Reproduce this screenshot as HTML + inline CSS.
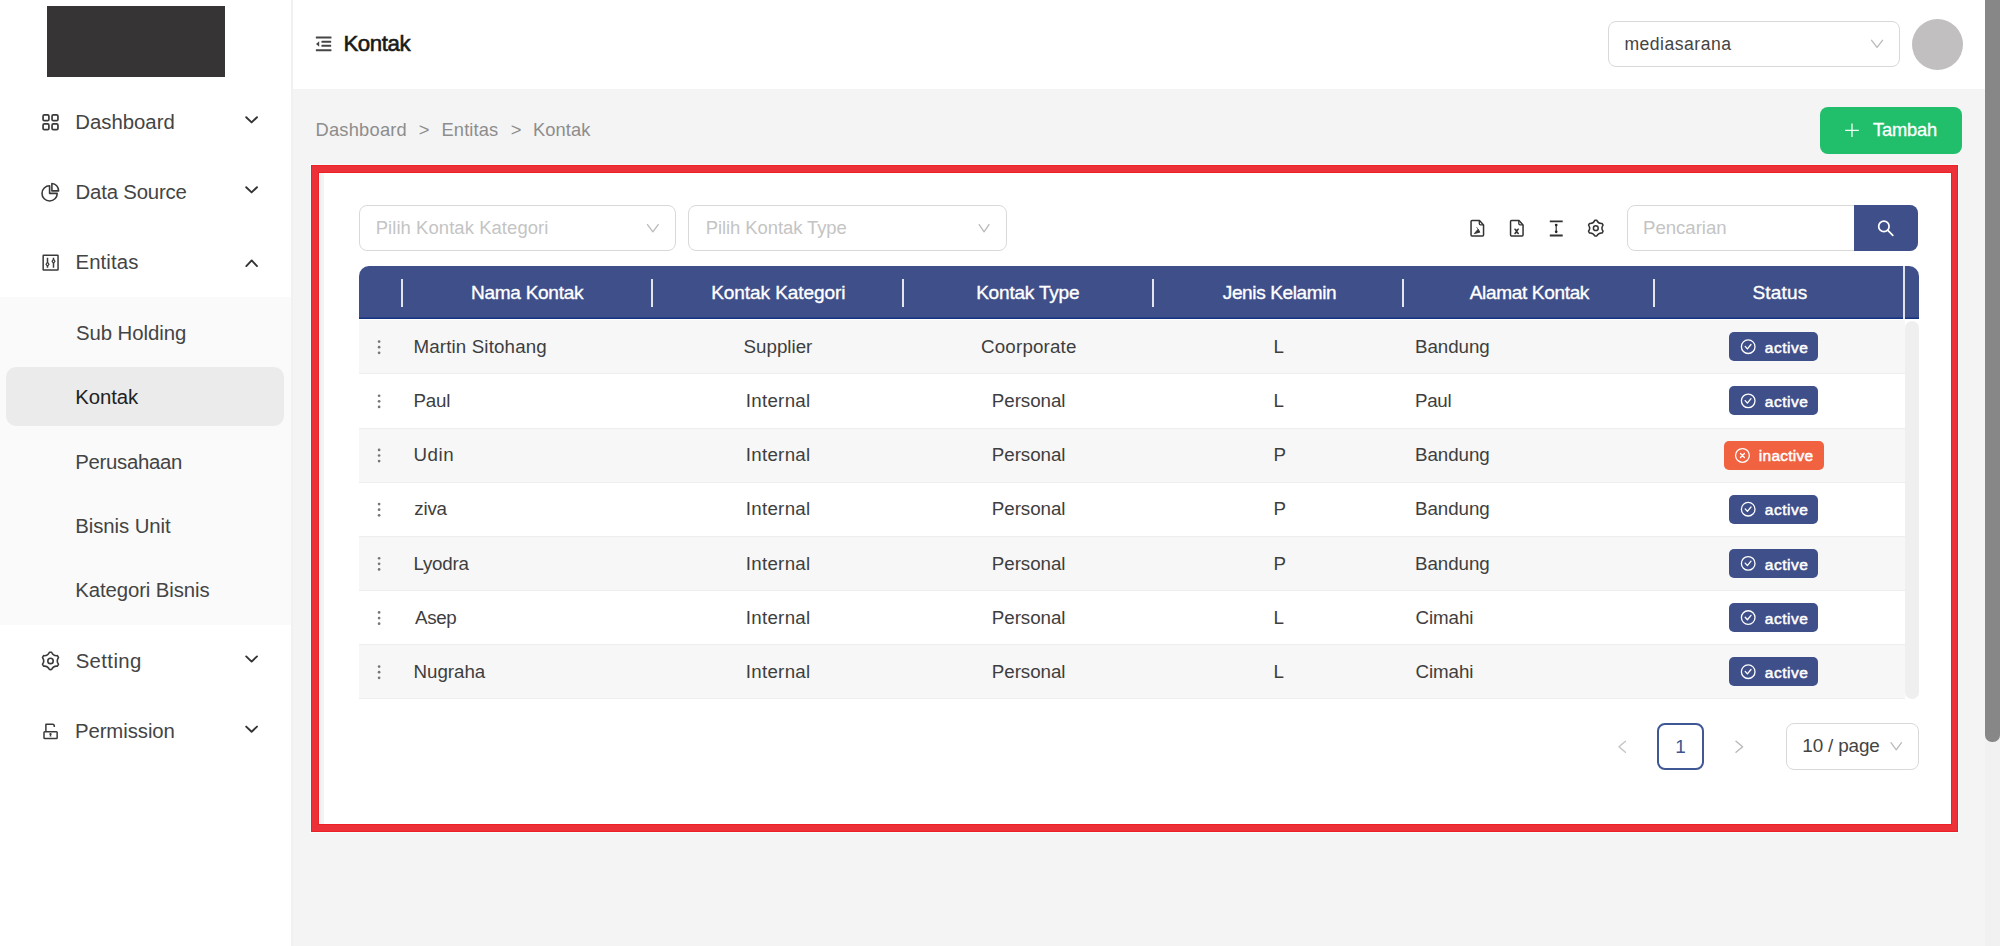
<!DOCTYPE html>
<html><head><meta charset="utf-8"><title>Kontak</title>
<style>
html,body{margin:0;padding:0}
body{width:2000px;height:946px;overflow:hidden;position:relative;background:#f4f4f4;font-family:"Liberation Sans",sans-serif}
.b{position:absolute}
.t{position:absolute;white-space:nowrap;line-height:0;font-family:"Liberation Sans",sans-serif}
svg{position:absolute;overflow:visible}
</style></head><body>
<div class="b" style="left:0px;top:0px;width:291px;height:946px;background:#fff"></div>
<div class="b" style="left:291px;top:0px;width:2px;height:946px;background:#f1f1f1"></div>
<div class="b" style="left:293px;top:0px;width:1692px;height:89px;background:#fff"></div>
<div class="b" style="left:47px;top:6px;width:178px;height:71px;background:#373435"></div>
<div class="b" style="left:0px;top:297px;width:291px;height:328px;background:#fafafa"></div>
<div class="b" style="left:6px;top:367px;width:278px;height:59px;background:#ebebeb;border-radius:10px"></div>
<div class="t" style="left:75.23px;top:121.70px;font-size:20.35px;font-weight:normal;letter-spacing:0.004px;color:#444;">Dashboard</div>
<div class="t" style="left:75.53px;top:191.95px;font-size:20.35px;font-weight:normal;letter-spacing:-0.174px;color:#444;">Data Source</div>
<div class="t" style="left:75.53px;top:262.15px;font-size:20.35px;font-weight:normal;letter-spacing:0.099px;color:#444;">Entitas</div>
<div class="t" style="left:75.68px;top:660.75px;font-size:20.35px;font-weight:normal;letter-spacing:0.380px;color:#444;">Setting</div>
<div class="t" style="left:74.93px;top:730.65px;font-size:20.35px;font-weight:normal;letter-spacing:-0.072px;color:#444;">Permission</div>
<div class="t" style="left:75.98px;top:333.15px;font-size:20.35px;font-weight:normal;letter-spacing:-0.053px;color:#444;">Sub Holding</div>
<div class="t" style="left:75.23px;top:396.85px;font-size:20.35px;font-weight:normal;letter-spacing:-0.083px;color:#222;">Kontak</div>
<div class="t" style="left:75.23px;top:461.95px;font-size:20.35px;font-weight:normal;letter-spacing:-0.295px;color:#444;">Perusahaan</div>
<div class="t" style="left:75.23px;top:526.35px;font-size:20.35px;font-weight:normal;letter-spacing:-0.060px;color:#444;">Bisnis Unit</div>
<div class="t" style="left:75.23px;top:590.15px;font-size:20.35px;font-weight:normal;letter-spacing:-0.094px;color:#444;">Kategori Bisnis</div>
<div class="t" style="left:343.38px;top:44.15px;font-size:22.24px;font-weight:normal;letter-spacing:-0.409px;color:#1a1a1a;-webkit-text-stroke:0.6px #1a1a1a">Kontak</div>
<div class="b" style="left:1608px;top:21px;width:292px;height:46px;background:#fff;border:1px solid #d9d9d9;border-radius:8px;box-sizing:border-box"></div>
<div class="t" style="left:1624.43px;top:43.75px;font-size:17.60px;font-weight:normal;letter-spacing:0.482px;color:#444;">mediasarana</div>
<div class="b" style="left:1912px;top:19px;width:51px;height:51px;background:#c1bfc0;border-radius:50%"></div>
<div class="b" style="left:1985px;top:0px;width:15px;height:946px;background:#f1f1f1"></div>
<div class="b" style="left:1985px;top:0px;width:15px;height:742px;background:#878787;border-radius:0 0 7px 7px"></div>
<div class="t" style="left:315.50px;top:129.75px;font-size:18.31px;font-weight:normal;letter-spacing:0.223px;color:#8d8d8d;">Dashboard</div>
<div class="t" style="left:418.80px;top:129.75px;font-size:18.31px;font-weight:normal;letter-spacing:0.000px;color:#8d8d8d;">&gt;</div>
<div class="t" style="left:441.50px;top:129.75px;font-size:18.31px;font-weight:normal;letter-spacing:0.129px;color:#8d8d8d;">Entitas</div>
<div class="t" style="left:510.70px;top:129.75px;font-size:18.31px;font-weight:normal;letter-spacing:0.000px;color:#8d8d8d;">&gt;</div>
<div class="t" style="left:532.90px;top:129.75px;font-size:18.31px;font-weight:normal;letter-spacing:0.132px;color:#8d8d8d;">Kontak</div>
<div class="b" style="left:1820px;top:107px;width:142px;height:47px;background:#21bf6b;border-radius:8px"></div>
<div class="t" style="left:1872.99px;top:129.95px;font-size:18.31px;font-weight:normal;letter-spacing:-0.157px;color:#fff;-webkit-text-stroke:0.3px #fff">Tambah</div>
<div class="b" style="left:324px;top:173px;width:1627px;height:651px;background:#fff"></div>
<div class="b" style="left:319px;top:173px;width:1px;height:651px;background:#f6fdfd"></div>
<div class="b" style="left:359px;top:205px;width:317px;height:46px;background:#fff;border:1px solid #d9d9d9;border-radius:8px;box-sizing:border-box"></div>
<div class="t" style="left:375.69px;top:228.05px;font-size:18.46px;font-weight:normal;letter-spacing:0.075px;color:#c4c4c4;">Pilih Kontak Kategori</div>
<div class="b" style="left:688px;top:205px;width:319px;height:46px;background:#fff;border:1px solid #d9d9d9;border-radius:8px;box-sizing:border-box"></div>
<div class="t" style="left:705.69px;top:228.05px;font-size:18.46px;font-weight:normal;letter-spacing:-0.063px;color:#c4c4c4;">Pilih Kontak Type</div>
<div class="b" style="left:1627px;top:205px;width:291px;height:46px;background:#fff;border:1px solid #d9d9d9;border-radius:8px;box-sizing:border-box"></div>
<div class="b" style="left:1854px;top:205px;width:64px;height:46px;background:#3e4f8a;border-radius:0 8px 8px 0"></div>
<div class="t" style="left:1643.07px;top:228.15px;font-size:18.60px;font-weight:normal;letter-spacing:-0.030px;color:#c4c4c4;">Pencarian</div>
<div class="b" style="left:359px;top:266px;width:1544px;height:53px;background:#3f4f8a;border-top-left-radius:10px;box-shadow:inset 0 -1.5px 0 #143383"></div>
<div class="b" style="left:1903px;top:266px;width:2px;height:53px;background:#dfe3ec"></div>
<div class="b" style="left:1905px;top:266px;width:14px;height:53px;background:#3f4f8a;border-top-right-radius:10px;box-shadow:inset 0 -1.5px 0 #143383"></div>
<div class="b" style="left:401.0px;top:279px;width:2px;height:28px;background:rgba(255,255,255,0.85)"></div>
<div class="b" style="left:651.0px;top:279px;width:2px;height:28px;background:rgba(255,255,255,0.85)"></div>
<div class="b" style="left:901.5px;top:279px;width:2px;height:28px;background:rgba(255,255,255,0.85)"></div>
<div class="b" style="left:1152.0px;top:279px;width:2px;height:28px;background:rgba(255,255,255,0.85)"></div>
<div class="b" style="left:1402.3px;top:279px;width:2px;height:28px;background:rgba(255,255,255,0.85)"></div>
<div class="b" style="left:1652.5px;top:279px;width:2px;height:28px;background:rgba(255,255,255,0.85)"></div>
<div class="t" style="left:470.94px;top:292.70px;font-size:19.04px;font-weight:normal;letter-spacing:-0.273px;color:#fff;-webkit-text-stroke:0.35px #fff">Nama Kontak</div>
<div class="t" style="left:711.14px;top:292.70px;font-size:19.04px;font-weight:normal;letter-spacing:-0.075px;color:#fff;-webkit-text-stroke:0.35px #fff">Kontak Kategori</div>
<div class="t" style="left:976.14px;top:292.70px;font-size:19.04px;font-weight:normal;letter-spacing:-0.199px;color:#fff;-webkit-text-stroke:0.35px #fff">Kontak Type</div>
<div class="t" style="left:1222.80px;top:292.70px;font-size:19.04px;font-weight:normal;letter-spacing:-0.392px;color:#fff;-webkit-text-stroke:0.35px #fff">Jenis Kelamin</div>
<div class="t" style="left:1469.76px;top:292.70px;font-size:19.04px;font-weight:normal;letter-spacing:-0.344px;color:#fff;-webkit-text-stroke:0.35px #fff">Alamat Kontak</div>
<div class="t" style="left:1752.54px;top:292.70px;font-size:19.04px;font-weight:normal;letter-spacing:0.134px;color:#fff;-webkit-text-stroke:0.35px #fff">Status</div>
<div class="b" style="left:359px;top:320.30px;width:1546px;height:54.17px;background:#f7f7f7;box-shadow:inset 0 -1px 0 #eeeeee"></div>
<div class="t" style="left:413.46px;top:346.85px;font-size:18.75px;font-weight:normal;letter-spacing:0.137px;color:#3e3e3e;">Martin Sitohang</div>
<div class="t" style="left:743.55px;top:346.85px;font-size:18.75px;font-weight:normal;letter-spacing:-0.004px;color:#3e3e3e;">Supplier</div>
<div class="t" style="left:981.05px;top:346.85px;font-size:18.75px;font-weight:normal;letter-spacing:0.175px;color:#3e3e3e;">Coorporate</div>
<div class="t" style="left:1273.56px;top:346.85px;font-size:18.75px;font-weight:normal;letter-spacing:0.000px;color:#3e3e3e;">L</div>
<div class="t" style="left:1414.96px;top:346.85px;font-size:18.75px;font-weight:normal;letter-spacing:-0.055px;color:#3e3e3e;">Bandung</div>
<div class="b" style="left:1729px;top:332px;width:89px;height:29px;background:#3f4f8a;border-radius:5px"></div>
<div class="t" style="left:1764.74px;top:347.85px;font-size:15.50px;font-weight:normal;letter-spacing:0.531px;color:#fff;-webkit-text-stroke:0.5px #fff">active</div>
<div class="b" style="left:359px;top:374.47px;width:1546px;height:54.17px;background:#fff;box-shadow:inset 0 -1px 0 #eeeeee"></div>
<div class="t" style="left:413.46px;top:401.02px;font-size:18.75px;font-weight:normal;letter-spacing:-0.179px;color:#3e3e3e;">Paul</div>
<div class="t" style="left:745.67px;top:401.02px;font-size:18.75px;font-weight:normal;letter-spacing:0.292px;color:#3e3e3e;">Internal</div>
<div class="t" style="left:991.81px;top:401.02px;font-size:18.75px;font-weight:normal;letter-spacing:-0.044px;color:#3e3e3e;">Personal</div>
<div class="t" style="left:1273.56px;top:401.02px;font-size:18.75px;font-weight:normal;letter-spacing:0.000px;color:#3e3e3e;">L</div>
<div class="t" style="left:1414.96px;top:401.02px;font-size:18.75px;font-weight:normal;letter-spacing:-0.312px;color:#3e3e3e;">Paul</div>
<div class="b" style="left:1729px;top:386px;width:89px;height:29px;background:#3f4f8a;border-radius:5px"></div>
<div class="t" style="left:1764.74px;top:402.02px;font-size:15.50px;font-weight:normal;letter-spacing:0.531px;color:#fff;-webkit-text-stroke:0.5px #fff">active</div>
<div class="b" style="left:359px;top:428.64px;width:1546px;height:54.17px;background:#f7f7f7;box-shadow:inset 0 -1px 0 #eeeeee"></div>
<div class="t" style="left:413.55px;top:455.19px;font-size:18.75px;font-weight:normal;letter-spacing:0.501px;color:#3e3e3e;">Udin</div>
<div class="t" style="left:745.67px;top:455.19px;font-size:18.75px;font-weight:normal;letter-spacing:0.292px;color:#3e3e3e;">Internal</div>
<div class="t" style="left:991.81px;top:455.19px;font-size:18.75px;font-weight:normal;letter-spacing:-0.044px;color:#3e3e3e;">Personal</div>
<div class="t" style="left:1273.56px;top:455.19px;font-size:18.75px;font-weight:normal;letter-spacing:0.000px;color:#3e3e3e;">P</div>
<div class="t" style="left:1414.96px;top:455.19px;font-size:18.75px;font-weight:normal;letter-spacing:-0.055px;color:#3e3e3e;">Bandung</div>
<div class="b" style="left:1723.5px;top:441px;width:100.70000000000005px;height:29px;background:#f06240;border-radius:5px"></div>
<div class="t" style="left:1758.86px;top:456.19px;font-size:15.50px;font-weight:normal;letter-spacing:0.239px;color:#fff;-webkit-text-stroke:0.5px #fff">inactive</div>
<div class="b" style="left:359px;top:482.81px;width:1546px;height:54.17px;background:#fff;box-shadow:inset 0 -1px 0 #eeeeee"></div>
<div class="t" style="left:414.24px;top:509.36px;font-size:18.75px;font-weight:normal;letter-spacing:-0.195px;color:#3e3e3e;">ziva</div>
<div class="t" style="left:745.67px;top:509.36px;font-size:18.75px;font-weight:normal;letter-spacing:0.292px;color:#3e3e3e;">Internal</div>
<div class="t" style="left:991.81px;top:509.36px;font-size:18.75px;font-weight:normal;letter-spacing:-0.044px;color:#3e3e3e;">Personal</div>
<div class="t" style="left:1273.56px;top:509.36px;font-size:18.75px;font-weight:normal;letter-spacing:0.000px;color:#3e3e3e;">P</div>
<div class="t" style="left:1414.96px;top:509.36px;font-size:18.75px;font-weight:normal;letter-spacing:-0.055px;color:#3e3e3e;">Bandung</div>
<div class="b" style="left:1729px;top:495px;width:89px;height:29px;background:#3f4f8a;border-radius:5px"></div>
<div class="t" style="left:1764.74px;top:510.36px;font-size:15.50px;font-weight:normal;letter-spacing:0.531px;color:#fff;-webkit-text-stroke:0.5px #fff">active</div>
<div class="b" style="left:359px;top:536.98px;width:1546px;height:54.17px;background:#f7f7f7;box-shadow:inset 0 -1px 0 #eeeeee"></div>
<div class="t" style="left:413.46px;top:563.53px;font-size:18.75px;font-weight:normal;letter-spacing:-0.239px;color:#3e3e3e;">Lyodra</div>
<div class="t" style="left:745.67px;top:563.53px;font-size:18.75px;font-weight:normal;letter-spacing:0.292px;color:#3e3e3e;">Internal</div>
<div class="t" style="left:991.81px;top:563.53px;font-size:18.75px;font-weight:normal;letter-spacing:-0.044px;color:#3e3e3e;">Personal</div>
<div class="t" style="left:1273.56px;top:563.53px;font-size:18.75px;font-weight:normal;letter-spacing:0.000px;color:#3e3e3e;">P</div>
<div class="t" style="left:1414.96px;top:563.53px;font-size:18.75px;font-weight:normal;letter-spacing:-0.055px;color:#3e3e3e;">Bandung</div>
<div class="b" style="left:1729px;top:549px;width:89px;height:29px;background:#3f4f8a;border-radius:5px"></div>
<div class="t" style="left:1764.74px;top:564.53px;font-size:15.50px;font-weight:normal;letter-spacing:0.531px;color:#fff;-webkit-text-stroke:0.5px #fff">active</div>
<div class="b" style="left:359px;top:591.15px;width:1546px;height:54.17px;background:#fff;box-shadow:inset 0 -1px 0 #eeeeee"></div>
<div class="t" style="left:414.96px;top:617.70px;font-size:18.75px;font-weight:normal;letter-spacing:-0.305px;color:#3e3e3e;">Asep</div>
<div class="t" style="left:745.67px;top:617.70px;font-size:18.75px;font-weight:normal;letter-spacing:0.292px;color:#3e3e3e;">Internal</div>
<div class="t" style="left:991.81px;top:617.70px;font-size:18.75px;font-weight:normal;letter-spacing:-0.044px;color:#3e3e3e;">Personal</div>
<div class="t" style="left:1273.56px;top:617.70px;font-size:18.75px;font-weight:normal;letter-spacing:0.000px;color:#3e3e3e;">L</div>
<div class="t" style="left:1415.55px;top:617.70px;font-size:18.75px;font-weight:normal;letter-spacing:-0.106px;color:#3e3e3e;">Cimahi</div>
<div class="b" style="left:1729px;top:603px;width:89px;height:29px;background:#3f4f8a;border-radius:5px"></div>
<div class="t" style="left:1764.74px;top:618.70px;font-size:15.50px;font-weight:normal;letter-spacing:0.531px;color:#fff;-webkit-text-stroke:0.5px #fff">active</div>
<div class="b" style="left:359px;top:645.32px;width:1546px;height:54.17px;background:#f7f7f7;box-shadow:inset 0 -1px 0 #eeeeee"></div>
<div class="t" style="left:413.46px;top:671.87px;font-size:18.75px;font-weight:normal;letter-spacing:-0.014px;color:#3e3e3e;">Nugraha</div>
<div class="t" style="left:745.67px;top:671.87px;font-size:18.75px;font-weight:normal;letter-spacing:0.292px;color:#3e3e3e;">Internal</div>
<div class="t" style="left:991.81px;top:671.87px;font-size:18.75px;font-weight:normal;letter-spacing:-0.044px;color:#3e3e3e;">Personal</div>
<div class="t" style="left:1273.56px;top:671.87px;font-size:18.75px;font-weight:normal;letter-spacing:0.000px;color:#3e3e3e;">L</div>
<div class="t" style="left:1415.55px;top:671.87px;font-size:18.75px;font-weight:normal;letter-spacing:-0.106px;color:#3e3e3e;">Cimahi</div>
<div class="b" style="left:1729px;top:657px;width:89px;height:29px;background:#3f4f8a;border-radius:5px"></div>
<div class="t" style="left:1764.74px;top:672.87px;font-size:15.50px;font-weight:normal;letter-spacing:0.531px;color:#fff;-webkit-text-stroke:0.5px #fff">active</div>
<div class="b" style="left:1905px;top:321px;width:14px;height:378px;background:#efefef;border-radius:7px"></div>
<div class="b" style="left:1657px;top:723px;width:47px;height:47px;border:2px solid #3f5795;border-radius:8px;box-sizing:border-box;background:#fff"></div>
<div class="t" style="left:1675.26px;top:746.65px;font-size:18.90px;font-weight:normal;letter-spacing:0.000px;color:#3e5590;">1</div>
<div class="b" style="left:1786px;top:723px;width:133px;height:47px;border:1px solid #d9d9d9;border-radius:8px;box-sizing:border-box;background:#fff"></div>
<div class="t" style="left:1802.36px;top:746.45px;font-size:18.90px;font-weight:normal;letter-spacing:-0.178px;color:#444;">10 / page</div>
<svg style="left:0;top:0" width="2000" height="946" viewBox="0 0 2000 946"><g fill="#454545"><rect x="315.8" y="36.5" width="15.7" height="2" rx="0.6"/><rect x="321.4" y="40.7" width="9.8" height="2" rx="0.6"/><rect x="321.4" y="44.8" width="9.8" height="2" rx="0.6"/><rect x="315.8" y="49.2" width="15.7" height="2" rx="0.6"/><path d="M316,44 L319.2,41.2 L319.2,46.8 Z"/></g><g fill="none" stroke="#3a3a3a" stroke-width="1.7"><rect x="43.05" y="114.95" width="5.85" height="5.75" rx="1.3"/><rect x="52.05" y="114.95" width="5.9" height="5.75" rx="1.3"/><rect x="43.05" y="123.95" width="5.85" height="5.75" rx="1.3"/><rect x="52.05" y="123.95" width="5.9" height="5.75" rx="1.3"/></g><g fill="none" stroke="#3a3a3a" stroke-width="1.6" stroke-linejoin="round"><path d="M49.6,185.8 A7.6,7.6 0 1 0 57.2,193.4 L49.6,193.4 Z"/><path d="M51.9,183.5 V190.9 H58.6 A6.8,7.3 0 0 0 51.9,183.5 Z"/></g><g fill="none" stroke="#3a3a3a" stroke-width="1.5"><rect x="43.15" y="255.15" width="14.9" height="14.9" rx="0.5"/><path d="M47.5,257.8 V267.8 M53.5,257.8 V267.8"/></g><g fill="#3a3a3a"><path d="M47.5,261.6 L49.7,264.3 L47.5,267 L45.3,264.3 Z"/><path d="M53.5,258.6 L55.7,261.3 L53.5,264 L51.3,261.3 Z"/></g><g fill="#fff"><circle cx="47.5" cy="264.3" r="0.7"/><circle cx="53.5" cy="261.3" r="0.7"/></g><path d="M51.56,652.26 A8.70,8.70 0 0 0 49.44,652.26 Q47.75,656.14 43.55,655.66 A8.70,8.70 0 0 0 42.49,657.50 Q45.00,660.90 42.49,664.30 A8.70,8.70 0 0 0 43.55,666.14 Q47.75,665.66 49.44,669.54 A8.70,8.70 0 0 0 51.56,669.54 Q53.25,665.66 57.45,666.14 A8.70,8.70 0 0 0 58.51,664.30 Q56.00,660.90 58.51,657.50 A8.70,8.70 0 0 0 57.45,655.66 Q53.25,656.14 51.56,652.26Z" fill="none" stroke="#3a3a3a" stroke-width="1.6" stroke-linejoin="round"/><circle cx="50.5" cy="660.9" r="2.7" fill="none" stroke="#3a3a3a" stroke-width="1.6"/><g fill="none" stroke="#3a3a3a" stroke-width="1.5" stroke-linejoin="round"><rect x="44" y="731.65" width="13.15" height="6.9" rx="0.8"/><path d="M45.9,731.5 V724.3 H52.6 Q54.3,724.3 54.3,726.3 V727"/></g><path d="M50.5,733.6 L51.5,736.6 L49.5,736.6 Z" fill="#3a3a3a"/><circle cx="50.5" cy="734.1" r="1.2" fill="#3a3a3a"/><path d="M246.2,117.2 L251.6,122.4 L257,117.2" fill="none" stroke="#333" stroke-width="1.9" stroke-linecap="round" stroke-linejoin="round"/><path d="M246.2,187.2 L251.6,192.39999999999998 L257,187.2" fill="none" stroke="#333" stroke-width="1.9" stroke-linecap="round" stroke-linejoin="round"/><path d="M246.2,656.4 L251.6,661.6 L257,656.4" fill="none" stroke="#333" stroke-width="1.9" stroke-linecap="round" stroke-linejoin="round"/><path d="M246.2,726.6 L251.6,731.8000000000001 L257,726.6" fill="none" stroke="#333" stroke-width="1.9" stroke-linecap="round" stroke-linejoin="round"/><path d="M246.3,266.1 L251.7,260.4 L257,266.1" fill="none" stroke="#333" stroke-width="1.9" stroke-linecap="round" stroke-linejoin="round"/><path d="M647.5,224.6 L652.85,231.8 L658.2,224.6" fill="none" stroke="#bababa" stroke-width="1.3" stroke-linecap="round" stroke-linejoin="round"/><path d="M979.2,224.6 L984.1,231.8 L989,224.6" fill="none" stroke="#bababa" stroke-width="1.3" stroke-linecap="round" stroke-linejoin="round"/><path d="M1871.6,40.3 L1877.05,47.3 L1882.5,40.3" fill="none" stroke="#bababa" stroke-width="1.3" stroke-linecap="round" stroke-linejoin="round"/><path d="M1891,742.7 L1896.25,749.8 L1901.5,742.7" fill="none" stroke="#bababa" stroke-width="1.3" stroke-linecap="round" stroke-linejoin="round"/><path d="M1852,123.6 V137.1 M1845.2,130.35 H1858.8" stroke="#f0fff6" stroke-width="1.3" fill="none"/><g fill="none" stroke="#333" stroke-width="1.5" stroke-linejoin="round"><path d="M1471.05,221.5 Q1471.05,220.55 1472.0,220.55 H1479.5 L1483.55,224.9 V235.1 Q1483.55,236.05 1482.6,236.05 H1472.0 Q1471.05,236.05 1471.05,235.1 Z"/><path d="M1479.3,220.8 V223.6 Q1479.3,224.9 1480.6,224.9 H1483.3" stroke-width="1.3"/></g><path d="M1474.3,233.6 L1478.2,229.2 L1479.8,232.2 Z" fill="#333" stroke="#333" stroke-width="0.9" stroke-linejoin="round"/><path d="M1476.5,227 L1478.4,229.8" stroke="#555" stroke-width="0.8"/><g fill="none" stroke="#333" stroke-width="1.5" stroke-linejoin="round"><path d="M1510.55,221.5 Q1510.55,220.55 1511.5,220.55 H1519.0 L1523.05,224.9 V235.1 Q1523.05,236.05 1522.1,236.05 H1511.5 Q1510.55,236.05 1510.55,235.1 Z"/><path d="M1518.8,220.8 V223.6 Q1518.8,224.9 1520.1,224.9 H1522.8" stroke-width="1.3"/></g><path d="M1514.6,228.6 L1518.6,234 M1518.6,228.6 L1514.6,234" stroke="#333" stroke-width="1.4"/><path d="M1515.3,230 H1518 M1515.3,232.6 H1518" stroke="#333" stroke-width="1.1"/><g stroke="#333" fill="none"><path d="M1549.8,221.4 H1562.7 M1549.8,235.5 H1562.7" stroke-width="1.9"/><path d="M1556.2,225 V232" stroke-width="1.2"/></g><g fill="#222"><circle cx="1556.2" cy="225" r="1.35"/><circle cx="1556.2" cy="231.8" r="1.35"/></g><path d="M1596.76,220.36 A7.90,7.90 0 0 0 1594.84,220.36 Q1593.30,223.87 1589.49,223.45 A7.90,7.90 0 0 0 1588.53,225.11 Q1590.80,228.20 1588.53,231.29 A7.90,7.90 0 0 0 1589.49,232.95 Q1593.30,232.53 1594.84,236.04 A7.90,7.90 0 0 0 1596.76,236.04 Q1598.30,232.53 1602.11,232.95 A7.90,7.90 0 0 0 1603.07,231.29 Q1600.80,228.20 1603.07,225.11 A7.90,7.90 0 0 0 1602.11,223.45 Q1598.30,223.87 1596.76,220.36Z" fill="none" stroke="#333" stroke-width="1.5" stroke-linejoin="round"/><circle cx="1595.8" cy="228.2" r="2.4" fill="none" stroke="#333" stroke-width="1.5"/><g fill="none" stroke="#fff" stroke-width="1.7" stroke-linecap="round"><circle cx="1883.9" cy="226.4" r="5.2"/><path d="M1887.9,230.4 L1892.8,235.3"/></g><g fill="#767676"><circle cx="379.1" cy="341.58" r="1.35"/><circle cx="379.1" cy="347.19" r="1.35"/><circle cx="379.1" cy="352.79" r="1.35"/></g><g fill="#767676"><circle cx="379.1" cy="395.75" r="1.35"/><circle cx="379.1" cy="401.36" r="1.35"/><circle cx="379.1" cy="406.96" r="1.35"/></g><g fill="#767676"><circle cx="379.1" cy="449.92" r="1.35"/><circle cx="379.1" cy="455.52" r="1.35"/><circle cx="379.1" cy="461.12" r="1.35"/></g><g fill="#767676"><circle cx="379.1" cy="504.09" r="1.35"/><circle cx="379.1" cy="509.69" r="1.35"/><circle cx="379.1" cy="515.29" r="1.35"/></g><g fill="#767676"><circle cx="379.1" cy="558.26" r="1.35"/><circle cx="379.1" cy="563.87" r="1.35"/><circle cx="379.1" cy="569.47" r="1.35"/></g><g fill="#767676"><circle cx="379.1" cy="612.44" r="1.35"/><circle cx="379.1" cy="618.04" r="1.35"/><circle cx="379.1" cy="623.64" r="1.35"/></g><g fill="#767676"><circle cx="379.1" cy="666.60" r="1.35"/><circle cx="379.1" cy="672.20" r="1.35"/><circle cx="379.1" cy="677.80" r="1.35"/></g><g fill="none" stroke="#fff" stroke-width="1.3" stroke-linecap="round" stroke-linejoin="round"><circle cx="1748.2" cy="346.70" r="6.8"/><path d="M1745.2,346.40 L1747.4,348.90 L1751,344.50"/></g><g fill="none" stroke="#fff" stroke-width="1.3" stroke-linecap="round" stroke-linejoin="round"><circle cx="1748.2" cy="400.87" r="6.8"/><path d="M1745.2,400.57 L1747.4,403.07 L1751,398.67"/></g><g fill="none" stroke="#fff" stroke-width="1.3" stroke-linecap="round"><circle cx="1742.45" cy="455.44" r="6.9"/><path d="M1740.5,453.44 L1744.4,457.44 M1744.4,453.44 L1740.5,457.44"/></g><g fill="none" stroke="#fff" stroke-width="1.3" stroke-linecap="round" stroke-linejoin="round"><circle cx="1748.2" cy="509.21" r="6.8"/><path d="M1745.2,508.91 L1747.4,511.41 L1751,507.01"/></g><g fill="none" stroke="#fff" stroke-width="1.3" stroke-linecap="round" stroke-linejoin="round"><circle cx="1748.2" cy="563.38" r="6.8"/><path d="M1745.2,563.08 L1747.4,565.58 L1751,561.18"/></g><g fill="none" stroke="#fff" stroke-width="1.3" stroke-linecap="round" stroke-linejoin="round"><circle cx="1748.2" cy="617.55" r="6.8"/><path d="M1745.2,617.25 L1747.4,619.75 L1751,615.35"/></g><g fill="none" stroke="#fff" stroke-width="1.3" stroke-linecap="round" stroke-linejoin="round"><circle cx="1748.2" cy="671.72" r="6.8"/><path d="M1745.2,671.42 L1747.4,673.92 L1751,669.52"/></g><path d="M1625.4,741.2 L1619,746.7 L1625.4,752.2" fill="none" stroke="#c4c4c4" stroke-width="1.4" stroke-linecap="round" stroke-linejoin="round"/><path d="M1736,741.2 L1742.6,746.7 L1736,752.2" fill="none" stroke="#b8b8b8" stroke-width="1.4" stroke-linecap="round" stroke-linejoin="round"/></svg>
<div class="b" style="left:311px;top:165px;width:1647px;height:667px;border-style:solid;border-color:#ec3238;border-width:8px 7px 8px 8px;box-sizing:border-box;outline:1px solid #f6fdfd;"><div style="position:absolute;left:0;top:0;right:0;bottom:0;box-shadow:0 0 0 1px #ed2028"></div><div style="position:absolute;left:-8px;top:-8px;right:-7px;bottom:-8px;box-shadow:inset 0 0 0 1px #ed2028"></div></div>
</body></html>
